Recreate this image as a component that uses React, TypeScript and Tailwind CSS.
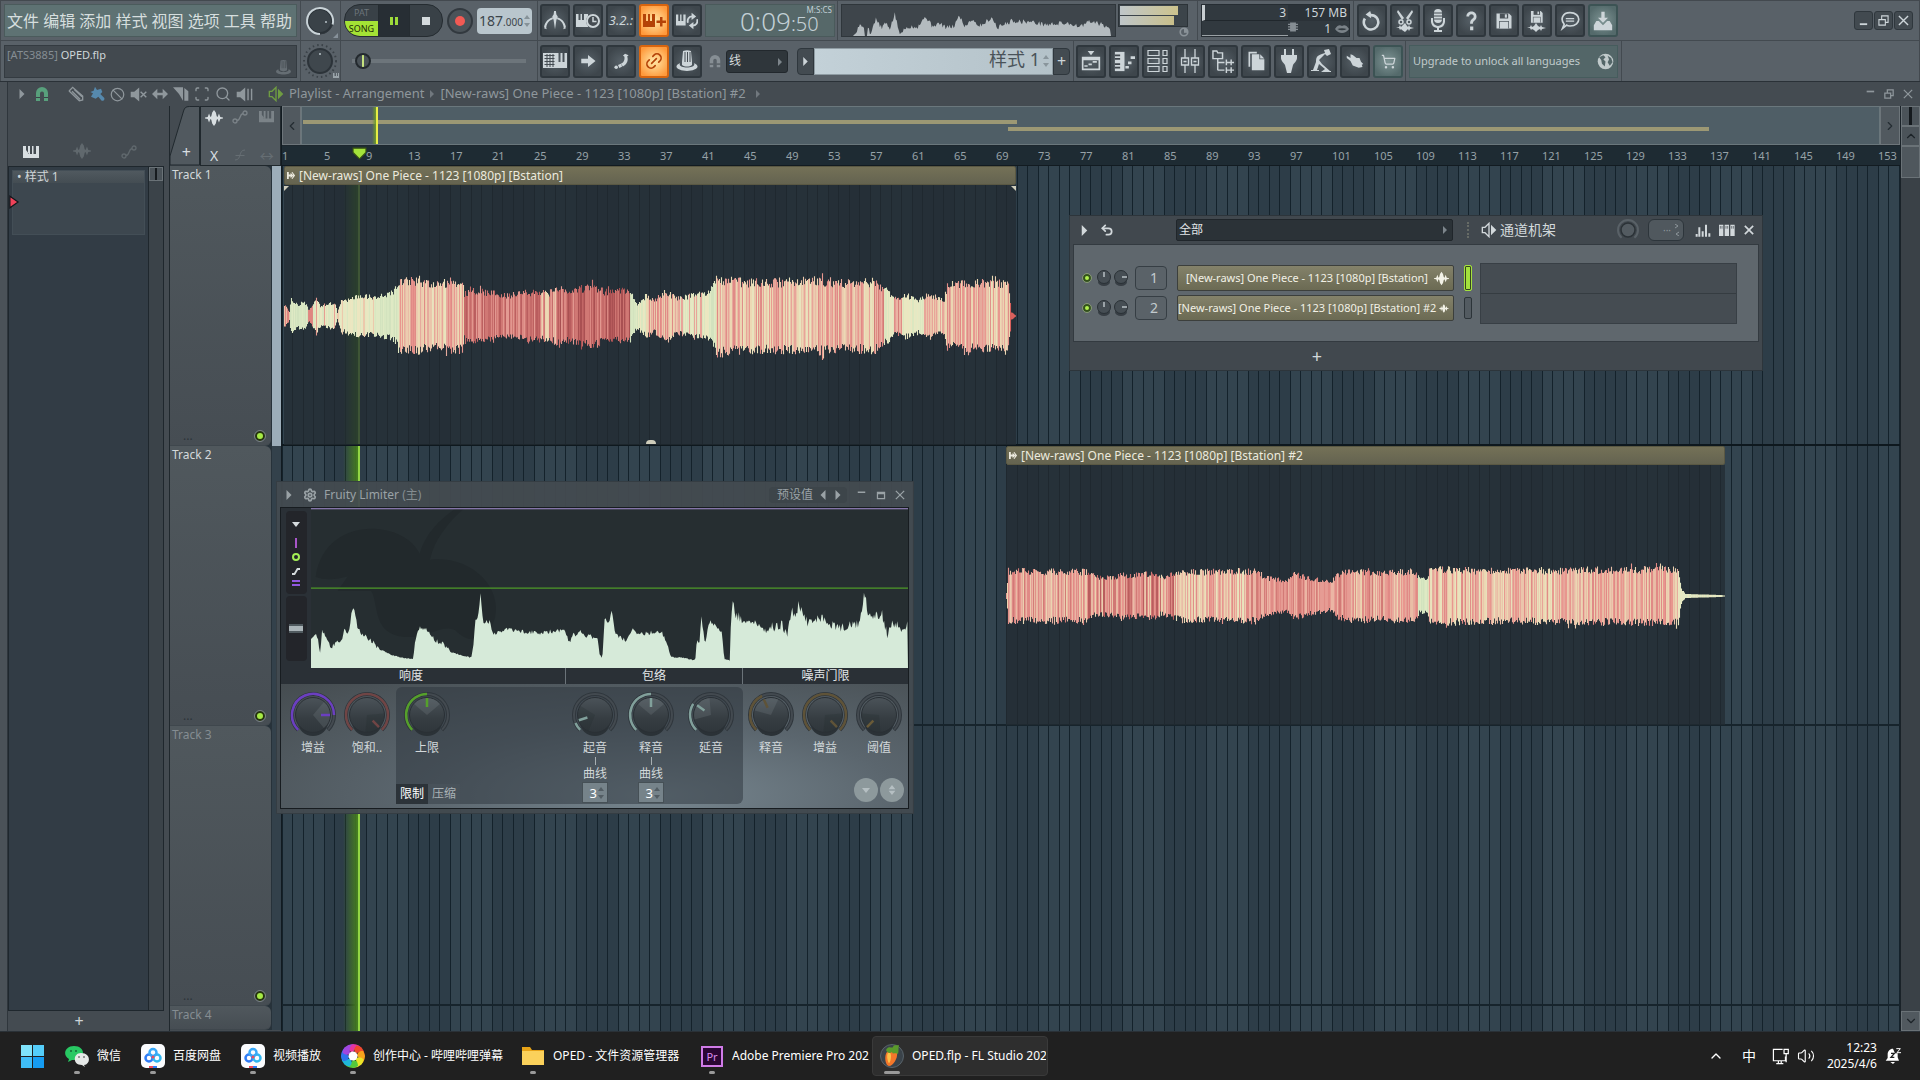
import React from "react";
import {
  Search, Ban, Scan, Link2, ShoppingCart, Undo2, Settings, Volume2, ChevronUp, ChevronDown, ChevronLeft, ChevronRight,
} from "lucide-react";

type Pt = [number, number];
type Kids = { children?: React.ReactNode };

/* ---------- helpers ---------- */

function rng(seed: number) {
  let s = seed;
  return () => {
    s = (s * 1664525 + 1013904223) % 4294967296;
    return s / 4294967296;
  };
}

function interp(pts: Pt[], x: number) {
  for (let i = 1; i < pts.length; i++) {
    if (x <= pts[i][0]) {
      const [x0, y0] = pts[i - 1];
      const [x1, y1] = pts[i];
      return y0 + ((y1 - y0) * (x - x0)) / Math.max(1, x1 - x0);
    }
  }
  return pts[pts.length - 1][1];
}

function polar(c: number, r: number, deg: number): Pt {
  const a = ((deg - 90) * Math.PI) / 180;
  return [c + r * Math.cos(a), c + r * Math.sin(a)];
}

function arc(c: number, r: number, a0: number, a1: number) {
  const [x0, y0] = polar(c, r, a0);
  const [x1, y1] = polar(c, r, a1);
  return `M${x0.toFixed(1)} ${y0.toFixed(1)}A${r} ${r} 0 ${a1 - a0 > 180 ? 1 : 0} 1 ${x1.toFixed(1)} ${y1.toFixed(1)}`;
}

/* ---------- icons ---------- */

function Ico({ s = 24, children, className = "", vb = "0 0 24 24" }: Kids & { s?: number; className?: string; vb?: string }) {
  return (
    <svg width={s} height={s} viewBox={vb} className={className} fill="currentColor" stroke="none" aria-hidden="true">
      {children}
    </svg>
  );
}

const Piano = ({ s = 16 }: { s?: number }) => (
  <Ico s={s} vb="0 0 16 16"><path d="M0 2h3v8h2V2h1v8M0 2h3v8h2.500V2h1.500v8h2V2h1.500v8H13V2h3v12H0z" fillRule="nonzero" /></Ico>
);
const Wave = ({ s = 20 }: { s?: number }) => (
  <Ico s={s} vb="0 0 20 20"><path d="M0 9.500l3-.5 1.500-4L6 9l1-1 1-4 2-3 2 3 1 4 1 1 1.500-4L17 9l3 .5v1l-3 .5-1.500 4L14 11l-1 1-1 4-2 3-2-3-1-4-1-1-1.500 4L3 11l-3-.5z" /></Ico>
);
const Auto = ({ s = 16 }: { s?: number }) => (
  <Ico s={s} vb="0 0 16 16"><g fill="none" stroke="currentColor" strokeWidth="1.300"><circle cx="3" cy="12" r="2" /><circle cx="13" cy="4" r="2" /><path d="M5 11.500c4 0 2-6 6-7" /></g></Ico>
);
const Magnet = ({ s = 16 }: { s?: number }) => (
  <Ico s={s} vb="0 0 16 16"><path d="M2 15V7a6 6 0 0112 0v8h-4V7.500a2 2 0 00-4 0V15z" /><path d="M2 11.500h4M10 11.500h4" stroke="#3a4147" strokeWidth="1" /></Ico>
);
const Floppy = () => (
  <><path d="M3 3h15l3 3v15H3z" /><path d="M7 3h10v6H7z" fill="#4a5258" /><path d="M13 4h2.500v4H13z" /><path d="M6 12h12v9H6z" fill="#5d666c" /><path d="M7 13h10v8H7z" /></>
);
const Spin = () => (
  <svg width="8" height="14" viewBox="0 0 8 14" className="shrink-0 opacity-40" fill="currentColor" aria-hidden="true"><path d="M4 1l3 4H1zM4 13l3-4H1z" /></svg>
);
const Arrow = ({ s = 8, className = "" }: { s?: number; className?: string }) => (
  <Ico s={s} vb="0 0 8 8" className={className}><path d="M2 0l4 4-4 4z" /></Ico>
);

const icons = {
  metronome: <><path d="M0 19C1 13 5 9 10 8l-.5 2C6 11 3 14 2.500 19zM24 19c-1-6-5-10-10-11l.5 2c3.500 1 6.500 4 7 9z" /><path d="M11 1h2l.5 4L15 7l-1.500 4L12 21l-1.500-10L9 7l1.500-2z" /><path d="M0 20l2-2 1 3zM24 20l-2-2-1 3z" /></>,
  wait: <><path d="M0 5h2.500v6h2V5H6v6h2V5h4v13H0z" /><circle cx="17" cy="12" r="7" fill="#454c52" /><circle cx="17" cy="12" r="6" fill="none" stroke="currentColor" strokeWidth="2" /><path d="M17 8v4.500h3.500" fill="none" stroke="currentColor" strokeWidth="1.500" /></>,
  overdub: <><path d="M1 5h3v7h2V5h2v7h2V5h3v13H1z" /><path d="M18 8h2.500v3.500H24V14h-3.500v3.500H18V14h-3.500v-2.500H18z" /></>,
  loop: <><path d="M0 5h2.500v7h2V5H6v7h2V5h2.500v12H0z" /><g fill="none" stroke="currentColor" strokeWidth="2"><path d="M13 14c-1-4 1-7 5-7M23 10c1 4-1 7-5 7" /></g><path d="M17 3l5 4-5 4zM19 21l-5-4 5-4z" /></>,
  typing: <><path d="M0 4h13v15H0z" /><path d="M1.500 6.500h10M1.500 9.500h10M1.500 12.500h10M1.500 15.500h10M4 5v13M7 5v13M10 5v13" stroke="#454c52" /><path d="M13 4h2.500v9h2V4h2v9h2V4H24v15H13z" /></>,
  arrow: <path d="M3 9h9V4l10 8-10 8v-5H3z" />,
  notes: <><path d="M17 1l5 2-2 2c2 5 0 11-6 14l-3-4c4-1 6-5 5-10l-2-1z" /><circle cx="4.500" cy="20" r="2.500" /><path d="M7 17l4-2 2 4-4 2z" /></>,
  hat: <><path d="M8 2c3-1 5-1 8 0l1 11v3c-3 2-7 2-10 0v-3z" /><path d="M10 3v10M12.500 3v10M15 3v10" stroke="#454c52" /><path d="M5 14c-8 4-1 8 7 8s15-4 7-8c3 6-17 6-14 0z" /></>,
  undo: <path d="M10 1L5 5l6 4V7a6.500 6.500 0 11-5.500 3L3 8.500A9.300 9.300 0 1011 4z" />,
  cut: <><path d="M5 1l6 8-2 2L4 3zM19 1l-6 8 2 2 5-8z" /><g fill="none" stroke="currentColor" strokeWidth="1.500"><circle cx="8" cy="13" r="2" /><circle cx="16" cy="13" r="2" /></g><path d="M3 19l3-1 1-2 1 2 1-1 3-3 2 3 1 1 1-2 1 2 4 1-4 1-1 2-1-2-1 1-2 2-3-2-1-1-1 1-1-2z" /></>,
  mic: <><rect x="8" y="0" width="8" height="14" rx="4" /><path d="M8 4h8M8 7h8M8 10h8" stroke="#454c52" strokeWidth="1" /><path d="M5 9h2v3a5 5 0 0010 0V9h2v4a7 7 0 01-6 6v2h3v2H8v-2h3v-2a7 7 0 01-6-6z" /></>,
  help: <path d="M7 7c0-7 11-7 11 0 0 5-4 4-4 8h-3c0-6 4-5 4-8 0-3-5-3-5 0zM11 18h3.500v4H11z" />,
  save: <Floppy />,
  saveNew: <><g transform="translate(4 0) scale(.65)"><Floppy /></g><path d="M2 19l3-1 1-2 1 2 2-1 2-3 2 3 2 1 1-2 1 2 4 1-4 1-1 2-1-2-2 1-2 2-2-2-2-1-1 1-1-2z" /></>,
  chat: <g fill="none" stroke="currentColor" strokeWidth="2"><path d="M12 2c14 0 14 16 0 16-2 0-3 0-4-1l-5 4 2-5C0 10 3 2 12 2z" /><path d="M7 9h10M7 12h10" strokeWidth="1.500" /></g>,
  download: <path d="M10 1h4v7h4l-6 6-6-6h4zM4 12h3l5 5 5-5h3l3 5v6H1v-6z" />,
  playlist: <><path d="M8 0h8l-4 5z" /><path d="M1 7h22v16H1zM3 11v10h18V11z" fillRule="evenodd" /><path d="M4 17h4v2H4zM9 15h4v2H9zM14 12h5v2h-5z" /></>,
  pianoRoll: <><path d="M1 1h11v22H1z" /><path d="M1 5h6M1 9h6M1 15h6M1 19h6" stroke="#3f464c" strokeWidth="2" /><path d="M13 17h4v3h-4zM16 12h4v3h-4zM19 6h5v3h-5z" /></>,
  channels: <g fill="none" stroke="currentColor" strokeWidth="1.200"><path d="M3 1.500h11v5H3zM3 9.500h11v5H3zM3 17.500h11v5H3zM18 1.500h4v5h-4zM18 9.500h4v5h-4zM18 17.500h4v5h-4z" /></g>,
  mixer: <g fill="none" stroke="currentColor" strokeWidth="1.300"><path d="M7 0v9M7 16v8M17 0v9M17 16v8M3.500 9h7v7h-7zM13.500 9h7v7h-7zM5.500 12.500h3M15.500 12.500h3" /></g>,
  browser: <g fill="none" stroke="currentColor" strokeWidth="1.500"><path d="M1 1h4l1 2h5v6H1zM6 9v12M6 13h7M6 21h7M15 10v6M20 10v6M15 13h8M15 18v6M20 18v6M15 21h8" /></g>,
  copy: <><path d="M3 1h10v2H5v16H3z" /><path d="M7 4h9v6h6v13H7z" /><path d="M17 4l5 5h-5z" /></>,
  plug: <path d="M7 0h2v6h6V0h2v6h3v3c0 3-3 5-4 7l-2 8h-4l-2-8C7 14 4 12 4 9V6h3z" />,
  tempo: <path d="M14 1l5-1 2 5-4 2-2-2-6 6 3 4 8 7h1v1H11l4-3-6-5-2 6h2v1H1v-1h2l3-8c0-6 2-7 9-9z" />,
  hand: <path d="M1 5l5 3V3l3 1 5 4h4l2 5 3 3-2 1 1 3-5 1-8-3-3-6-5-4z" />,
};

type IconName = keyof typeof icons;

/* ---------- controls ---------- */

function ToolBtn({ name, tone = "dark", size = 24, label }: { name?: IconName; tone?: "dark" | "hot" | "teal"; size?: number; label: string }) {
  const tones = {
    dark: "border-[#2f373d] bg-[radial-gradient(circle,#566067_0%,#3e464c_75%)] text-[#cdd5d9]",
    hot: "border-[#d8650f] bg-[radial-gradient(circle,#ffe8a8_0%,#ff9a3c_85%)] text-[#b44308]",
    teal: "border-[#3c5354] bg-[radial-gradient(circle,#7e9494_0%,#546a6b_80%)] text-[#cdd5d9]",
  };
  return (
    <button aria-label={label} className={`flex h-[33px] w-[30px] shrink-0 items-center justify-center rounded-[3px] border-2 ${tones[tone]}`}>
      {name ? <Ico s={size}>{icons[name]}</Ico> : label === "倒计时" ? <span className="text-[13px] italic leading-none">3.2.:</span> : label === "链接" ? <Link2 size={20} strokeWidth={2} className="-rotate-45" /> : <ShoppingCart size={15} />}
    </button>
  );
}

function Sect({ children, className = "" }: Kids & { className?: string }) {
  return <div className={`flex h-full shrink-0 items-center border-r border-[#434a50] ${className}`}>{children}</div>;
}

function TopBar() {
  const menus = ["文件", "编辑", "添加", "样式", "视图", "选项", "工具", "帮助"];
  const pts: Pt[] = [[0, 0], [11, 0], [14, 3], [17, 11], [22, 10], [23, 0], [25, 0], [26, 11], [28, 2], [34, 18], [40, 8], [43, 14], [48, 8], [53, 23], [58, 2], [66, 10], [76, 10], [84, 21], [90, 11], [98, 13], [105, 9], [112, 10], [118, 22], [123, 10], [130, 18], [138, 11], [142, 13], [150, 20], [156, 9], [170, 16], [190, 15], [205, 12], [225, 14], [240, 10], [247, 15], [256, 14], [268, 9], [270, 0], [274, 0]];
  const r = rng(5);
  let d = "M0 33";
  for (let x = 0; x <= 274; x++) {
    const v = interp(pts, x);
    d += `L${x} ${(33 - Math.max(0, v + (v > 4 ? (r() - 0.5) * 5 : 0))).toFixed(1)}`;
  }
  d += "L274 33Z";
  return (
    <header className="shrink-0 border border-b-0 border-[#43494f] bg-[#596168] text-[#cdd5d9]">
      <div className="flex h-10 items-center border-b border-[#434a50]">
        <Sect className="w-[300px] pl-[3px] pr-[3px]">
          <nav className="flex h-[33px] w-full items-center justify-around border border-[#4b5b5c] bg-[#5e7273] pr-[2px] text-base leading-none text-[#d6dede]">
            {menus.map((m) => <button key={m}>{m}</button>)}
          </nav>
        </Sect>
        <Sect className="w-10 justify-center">
          <svg width="34" height="34" viewBox="0 0 34 34" role="img" aria-label="主音量">
            <circle cx="16" cy="17" r="12" fill="#3a4248" stroke="#2b3238" strokeWidth="2" />
            <circle cx="16" cy="17" r="13" fill="none" stroke="#2f363c" />
            <path d={arc(16, 13, 180, 465)} transform="translate(0 1)" stroke="#c9d3d8" strokeWidth="2" fill="none" />
            <circle cx="22" cy="18" r="1" fill="#b9c3c8" /><path d="M34 29v5h-5z" fill="#87919a" />
          </svg>
        </Sect>
        <Sect className="w-[197px] gap-1 pl-[3px]">
          <div className="flex h-[33px] w-[99px] overflow-hidden rounded-[16px] border border-[#252c31] bg-[#394147]">
            <button className="flex w-[34px] flex-col border-r border-[#252c31] text-[9px] leading-[15px]">
              <span className="h-4 w-full text-[#6c747a]">PAT</span>
              <span className="h-4 w-full rounded-bl-xl bg-[#a4e335] text-[#1c2a08]">SONG</span>
            </button>
            <button aria-label="暂停" className="flex w-[31px] items-center justify-center gap-[2px] border-r border-[#252c31] bg-[#272e34]">
              <i className="h-2 w-[3px] bg-[#9ddb3a]" /><i className="h-2 w-[3px] bg-[#9ddb3a]" />
            </button>
            <button aria-label="停止" className="flex flex-1 items-center justify-center"><i className="h-2 w-2 bg-[#d4dadd]" /></button>
          </div>
          <button aria-label="录音" className="flex h-[26px] w-[26px] items-center justify-center rounded-full border-2 border-[#32393f] bg-[#4b5359]"><i className="h-[10px] w-[10px] rounded-full bg-[#f25a54]" /></button>
          <div className="flex h-[26px] w-[55px] items-center justify-between rounded bg-[#b9c6cd] px-[2px] text-[#3c454b]">
            <span className="text-sm leading-none">187<span className="text-[10px]">.000</span></span>
            <Spin />
          </div>
        </Sect>
        <Sect className="w-[300px] gap-[3px] px-[2px]">
          <ToolBtn name="metronome" label="节拍器" size={22} />
          <ToolBtn name="wait" label="等待输入" />
          <ToolBtn label="倒计时" />
          <ToolBtn name="overdub" tone="hot" label="叠录" />
          <ToolBtn name="loop" label="循环录音" size={22} />
          <div className="flex h-[33px] flex-1 border border-[#4a5a5b] bg-[#566869] pr-[2px] text-[#c3d0d6]">
            <span className="flex-1 text-right text-[26px] font-light leading-[32px]">0:09<span className="text-xl leading-none">:50</span></span>
            <span className="-ml-3 h-3 text-[8px] leading-[9px]">M:S:CS</span>
          </div>
        </Sect>
        <Sect className="w-[360px] gap-[2px] pl-[3px]">
          <div className="h-[33px] w-[275px] border border-[#2f363b] bg-[#3e454b]">
            <svg className="h-full w-full" viewBox="0 0 274 33" preserveAspectRatio="none" aria-label="示波器"><path d={d} fill="#b4bbbf" /></svg>
          </div>
          <div className="flex h-[33px] w-[77px] flex-col items-end">
            <div className="flex w-[70px] flex-col gap-px self-start border border-[#2c3338] bg-[#3c444a] p-px">
              <i className="h-[9px] w-[58px] bg-linear-to-r from-[#bfc6c9] to-[#cdc38c]" />
              <i className="h-[9px] w-[54px] bg-linear-to-r from-[#bfc6c9] to-[#c9bf8a]" />
            </div>
            <Ico s={10} className="mr-[6px] text-[#8a9298]"><circle cx="12" cy="12" r="9" fill="none" stroke="currentColor" strokeWidth="4" /><path d="M12 4v10h8V4z" /></Ico>
          </div>
        </Sect>
        <Sect className="w-[156px] px-[3px]">
          <div className="grid h-[33px] w-full grid-cols-[86px_1fr] grid-rows-[16px_15px] border border-[#262d33] bg-[#31393f] text-xs leading-[15px]">
            <span className="border-b border-l-[3px] border-[#20272c] border-l-[#c8ced1] pr-[2px] text-right">3</span>
            <span className="bg-[#2b3238] pr-[2px] text-right">157 MB</span>
            <span className="border-b border-[#9aa1a5]" />
            <span className="flex items-center justify-end gap-1">
              <Ico s={10} className="mb-1 mr-auto text-[#858d93]"><path d="M5 1h14v22H5zM0 4h24v3H0zM0 10h24v3H0zM0 16h24v3H0z" /></Ico>
              1
              <Ico s={14} className="text-[#7a8288]"><path d="M0 12c5-8 9-7 12-5 3-2 7-3 12 5-6 9-18 9-24 0zm4 0c5 3 11 3 16 0-5-2-11-2-16 0z" fillRule="evenodd" /></Ico>
            </span>
          </div>
        </Sect>
        <div className="flex gap-[3px] pl-[3px]">
          <ToolBtn name="undo" label="撤销" size={22} /><ToolBtn name="cut" label="剪切" /><ToolBtn name="mic" label="录制" /><ToolBtn name="help" label="帮助" size={22} />
          <ToolBtn name="save" label="保存" size={20} /><ToolBtn name="saveNew" label="另存" /><ToolBtn name="chat" label="聊天" size={20} /><ToolBtn name="download" tone="teal" label="下载" size={20} />
        </div>
        <div className="ml-auto mr-[6px] flex gap-px">
          {["最小化", "还原", "关闭"].map((l, i) => (
            <button key={l} aria-label={l} className="flex h-[19px] w-[19px] items-center justify-center rounded-[3px] border border-[#2f373d] bg-[#424a50]">
              <Ico s={11} vb="0 0 12 12">
                {i === 0 && <path d="M2 9h8v2H2z" />}
                {i === 1 && <g fill="none" stroke="currentColor" strokeWidth="1.200"><path d="M1 5h7v6H1zM4 5V1h7v7H8" /></g>}
                {i === 2 && <path d="M1 1l10 10M11 1L1 11" stroke="currentColor" strokeWidth="1.500" />}
              </Ico>
            </button>
          ))}
        </div>
      </div>
      <div className="flex h-[40px] items-center">
        <Sect className="w-[300px] pl-[3px] pr-[3px]">
          <div className="flex h-[33px] w-full items-start justify-between border border-[#343b41] bg-[#42494f] pl-[2px] pr-1 pt-px text-[11px] leading-4">
            <span className="text-[#858d93]">[ATS3885] <span className="text-[#cfd6d9]">OPED.flp</span></span>
            <Ico s={17} className="mt-3 text-[#666e74]">{icons.hat}</Ico>
          </div>
        </Sect>
        <Sect className="w-10 justify-center">
          <svg width="36" height="36" viewBox="0 0 36 36" role="img" aria-label="主音高">
            <circle cx="17" cy="18" r="16" fill="none" stroke="#3a4147" strokeWidth="2" strokeDasharray="1.500 3" />
            <circle cx="17" cy="18" r="12" fill="#3f474d" stroke="#2c3339" strokeWidth="2" /><circle cx="17" cy="11" r="1" fill="#b9c3c8" />
            <path d="M30 30h1.500v3H33v-3h1v3h1v-3h1v5h-6z" fill="#9aa4aa" />
          </svg>
        </Sect>
        <Sect className="w-[197px] px-[11px]">
          <input type="range" aria-label="主控滑块" defaultValue={2} className="h-4 w-full appearance-none bg-[linear-gradient(#6d757b,#6d757b)] bg-[length:100%_4px] bg-center bg-no-repeat [&::-webkit-slider-thumb]:h-4 [&::-webkit-slider-thumb]:w-4 [&::-webkit-slider-thumb]:appearance-none [&::-webkit-slider-thumb]:rounded-full [&::-webkit-slider-thumb]:border-2 [&::-webkit-slider-thumb]:border-[#23292e] [&::-webkit-slider-thumb]:bg-[linear-gradient(90deg,#4a5258_5px,#c5e27f_5px,#c5e27f_7px,#4a5258_7px)]" />
        </Sect>
        <Sect className="w-[536px] px-[2px]">
          <div className="flex gap-[3px]">
            <ToolBtn name="typing" label="键盘输入" /><ToolBtn name="arrow" label="自动滚动" size={18} /><ToolBtn name="notes" label="音符" size={17} /><ToolBtn tone="hot" label="链接" /><ToolBtn name="hat" label="多连接" size={24} />
          </div>
          <span className="ml-[6px] text-[#868e94]"><Magnet s={14} /></span>
          <div className="relative ml-1">
            <select aria-label="吸附" className="block h-[23px] w-[62px] appearance-none rounded-[3px] border border-[#22282d] bg-[#2f363b] pl-[2px] text-xs text-[#d5dbde]"><option>线</option></select>
            <Arrow className="pointer-events-none absolute right-1 top-2 text-[#7d858b]" />
          </div>
          <button aria-label="样式列表" className="ml-[9px] flex h-[27px] w-[17px] items-center justify-center rounded-l border border-[#2f373d] bg-[#434b51]"><Arrow s={9} /></button>
          <div className="flex h-[27px] w-[239px] items-center justify-end gap-[2px] border border-[#8f9ca3] bg-linear-to-r from-[#c3d1d8] to-[#b4c2c9] pr-[2px] text-lg leading-none text-[#4a5359]"><span className="-mt-1">样式 1</span> <Spin /></div>
          <button aria-label="新样式" className="h-[27px] w-[17px] rounded-r border border-[#2f373d] bg-[#434b51] text-base leading-none">+</button>
        </Sect>
        <Sect className="w-[332px] gap-[3px] pl-[2px]">
          <ToolBtn name="playlist" label="播放列表" size={20} /><ToolBtn name="pianoRoll" label="钢琴卷" size={21} /><ToolBtn name="channels" label="通道机架" size={24} /><ToolBtn name="mixer" label="混音台" size={24} /><ToolBtn name="browser" label="浏览器" size={23} />
          <ToolBtn name="copy" label="项目" size={20} /><ToolBtn name="plug" label="插件" size={24} /><ToolBtn name="tempo" label="节拍" size={24} /><ToolBtn name="hand" label="触控" size={18} /><ToolBtn tone="teal" label="商店" />
        </Sect>
        <Sect className="w-[216px] px-[3px]">
          <a href="#upgrade" className="flex h-[33px] w-full items-center justify-between whitespace-nowrap border border-[#465c5d] bg-[#536668] px-[3px] text-[10px] text-[#c0cacb] xl:text-[10px]">
            <span className="text-[11px]">Upgrade to unlock all languages</span>
            <Ico s={17}><circle cx="12" cy="12" r="11" /><path d="M3 6l6-3 3 3-3 3 3 3-1 7-4-4-1-5zM15 4l5 3 2 6-4 5-3-5 2-4z" fill="#536668" /></Ico>
          </a>
        </Sect>
      </div>
    </header>
  );
}

/* ---------- playlist ---------- */

function PlaylistTitle() {
  return (
    <div className="flex h-6 shrink-0 items-center text-[#8f979c]">
      <Arrow s={10} className="ml-[9px]" />
      <span className="ml-[7px] text-[#58a07c]"><Magnet s={16} /></span>
      <div className="ml-[18px] flex items-center gap-[5px]">
        <Ico s={16}><g fill="none" stroke="currentColor" strokeWidth="2"><path d="M2 7l5-5 15 13v6l-5 1L2 8zM6 8l12 12M9 5l12 11" /></g></Ico>
        <Ico s={16} className="text-[#5689ad]"><path d="M9 1l3 5 6-2 2 5-3 3 6 6c1 3-2 5-4 4l-5-6-4 3-7-3 3-5-4-2 5-2z" /></Ico>
        <Ban size={15} />
        <Ico s={17}><path d="M1 8h5l7-6v20l-7-6H1z" /><path d="M15 8l8 8M23 8l-8 8" stroke="currentColor" strokeWidth="2" /></Ico>
        <Ico s={16}><path d="M0 12l8-8v6h8V4l8 8-8 8v-6H8v6z" /></Ico>
        <Ico s={16}><path d="M0 2h15v20L9 12zM17 3l6 5v14h-6z" /></Ico>
        <Scan size={16} />
        <Search size={16} />
        <Ico s={17}><path d="M1 8h5l7-6v20l-7-6H1zM16 4h2v16h-2zM21 4h2v16h-2z" /></Ico>
      </div>
      <Ico s={16} className="ml-[15px] text-[#6f9c42]"><path d="M2 8h4l6-6v20l-6-6H2z" fill="none" stroke="currentColor" strokeWidth="2" /><path d="M15 4l8 8-8 8z" /></Ico>
      <h1 className="ml-[5px] text-[13px]">Playlist - Arrangement</h1>
      <Arrow className="mx-1 opacity-60" />
      <span className="text-[13px]">[New-raws] One Piece - 1123 [1080p] [Bstation] #2</span>
      <Arrow className="ml-2 opacity-60" />
      <div className="ml-auto mr-[7px] flex gap-[9px]">
        <Ico s={10} vb="0 0 12 12"><path d="M2 2h9v2H2z" /></Ico>
        <Ico s={10} vb="0 0 12 12"><g fill="none" stroke="currentColor" strokeWidth="1.500"><path d="M1 5h7v6H1zM4 5V1h7v7H8" /></g></Ico>
        <Ico s={10} vb="0 0 12 12"><path d="M1 1l10 10M11 1L1 11" stroke="currentColor" strokeWidth="1.500" /></Ico>
      </div>
    </div>
  );
}

function Picker() {
  return (
    <aside className="flex w-[161px] shrink-0 flex-col pr-[5px]">
      <div className="flex h-[60px] items-end gap-[34px] pb-[6px] pl-[15px] text-[#60686d]">
        <button aria-label="样式" className="text-[#d8dee1]"><Piano /></button>
        <button aria-label="音频"><Wave s={18} /></button>
        <button aria-label="自动化" className="-ml-1"><Auto /></button>
      </div>
      <div className="flex flex-1 border border-[#1f272d] bg-[#323c45]">
        <ul className="flex-1 border-r border-[#1f272d] p-[3px]">
          <li className="relative h-[65px] border border-[#434e56] bg-[#3d474f]">
            <button className="block h-3 w-full bg-linear-to-b from-[#50595f] to-[#444d53] pl-1 text-left text-xs leading-3 text-[#cfd5d8]">• 样式 1</button>
            <Ico s={14} vb="0 0 9 12" className="absolute -left-[6px] top-6 text-[#ef4259]"><path d="M1 1l7 5-7 5z" stroke="#11161a" /></Ico>
          </li>
        </ul>
        <div className="w-[14px] bg-[#3b4349]">
          <div className="flex h-[14px] justify-center border border-[#6a7277] bg-[#4b5359]"><i className="w-[2px] bg-[#161b1f]" /></div>
        </div>
      </div>
      <button aria-label="添加样式" className="h-5 pr-[14px] text-base leading-5 text-[#cdd4d8]">+</button>
    </aside>
  );
}

function TrackHeaders() {
  return (
    <div className="flex w-[112px] shrink-0 flex-col border-l border-[#20282d]">
      <div className="flex h-[60px] shrink-0">
        <div className="relative w-[30px]">
          <svg className="h-full w-full" viewBox="0 0 31 60" preserveAspectRatio="none" aria-hidden="true"><path d="M0 59V50L14 5C15 2 16 .5 20 .5H30.500V59z" fill="#51595f" stroke="#20282d" /></svg>
          <button aria-label="添加轨道" className="absolute bottom-[6px] right-[9px] text-base leading-none text-[#d8dee1]">+</button>
        </div>
        <div className="grid flex-1 grid-cols-3 content-between justify-items-center border border-[#20282d] bg-[#51595f] py-[2px] text-[#7b8388]">
          <span className="text-[#d8dee1]"><Wave s={18} /></span><Auto /><Piano s={15} />
          <span className="text-sm leading-none text-[#d8dee1]">X</span>
          <Ico s={12} className="opacity-50"><path d="M2 22C16 22 8 2 22 2M3 13h18" fill="none" stroke="currentColor" strokeWidth="2" /></Ico>
          <span className="text-sm leading-none opacity-50">↔</span>
        </div>
      </div>
      {[1, 2, 3, 4].map((n) => (
        <div key={n} className={`flex shrink-0 bg-[#27323a] ${n < 4 ? "h-[280px]" : "h-6"}`}>
          <div className={`flex w-[101px] flex-col justify-between rounded-r-md border-b border-[#3f474d] bg-linear-to-b from-[#50585d] to-[#464d53] pl-[2px] ${n > 2 ? "text-[#858d92]" : "text-[#d4d9db]"}`}>
            <span className="text-xs leading-[18px]">Track {n}</span>
            {n < 4 && (
              <div className="flex items-center justify-between pb-[3px] pl-[11px] pr-[6px]">
                <span className="text-xs leading-3 text-[#2d343a]">...</span>
                <button aria-label={`Track ${n} 开关`} className="h-[10px] w-[10px] rounded-full border-2 border-[#26350f] bg-[#a6ea45] outline outline-[#7b8387]" />
              </div>
            )}
          </div>
          <div className={`ml-px flex-1 ${n === 1 ? "bg-[#9cadb9]" : "bg-[#33414b]"}`} />
        </div>
      ))}
    </div>
  );
}

type Zone = [number, string[]];

function Waveform({ width, amp, zones, seed, label }: { width: number; amp: Pt[]; zones: Zone[]; seed: number; label: string }) {
  const r = rng(seed);
  const paths: Record<string, string> = {};
  for (let x = 0; x < width; x++) {
    const a = interp(amp, x);
    const j = a < 4 ? 0 : a * 0.28;
    const up = Math.max(0.5, a + (r() - 0.8) * j + (r() > 0.96 ? j * 0.4 : 0));
    const dn = Math.max(0.5, a + (r() - 0.8) * j + (r() > 0.96 ? j * 0.4 : 0));
    const cols = (zones.find((z) => x < z[0]) || zones[zones.length - 1])[1];
    const c = cols[Math.floor(r() * cols.length)];
    paths[c] = (paths[c] || "") + `M${x + 0.5} ${(131 - up).toFixed(1)}V${(131 + dn).toFixed(1)}`;
  }
  return (
    <svg width={width} height="260" viewBox={`0 0 ${width} 260`} role="img" aria-label={label} className="block">
      {Object.entries(paths).map(([c, d]) => <path key={c} d={d} stroke={c} strokeWidth="1.100" />)}
    </svg>
  );
}

const pale = ["#e9e8c2", "#e4e9c4", "#ece6c0", "#dbe7c1"];
const green = ["#d8e7c2", "#d2e2be", "#dfe9c4"];
const mix = ["#e9bda6", "#e8968e", "#ecd9b4", "#e6aa9d", "#eccdb0", "#e08a86"];
const lightMix = ["#ecd9b4", "#e9e3bd", "#e8a499", "#ebc5ab"];
const red = ["#d07874", "#b95d5e", "#e39a92", "#c56a69", "#dc8a84"];
const deepRed = ["#c56a69", "#b95d5e", "#d07874", "#a95052"];
const pink = ["#e08c86", "#e69c94", "#d27a76", "#ebb5a4"];

const amp1: Pt[] = [[0, 12], [5, 5], [7, 18], [14, 12], [20, 15], [25, 6], [32, 18], [36, 11], [46, 13], [51, 12], [53, 3], [57, 16], [70, 20], [80, 21], [90, 20], [105, 23], [113, 28], [115, 36], [133, 38], [150, 33], [165, 37], [178, 37], [180, 24], [190, 27], [225, 22], [240, 25], [265, 25], [275, 30], [283, 27], [310, 32], [320, 26], [345, 27], [353, 13], [362, 22], [370, 17], [380, 25], [395, 19], [412, 23], [425, 25], [432, 38], [480, 36], [540, 38], [560, 35], [590, 37], [602, 28], [612, 18], [620, 23], [635, 17], [645, 23], [660, 18], [663, 33], [690, 35], [724, 36], [727, 4], [732, 0]];
const zones1: Zone[] = [[6, ["#df8580", "#e9c4a8"]], [24, green], [29, ["#df8580"]], [51, [...pale, "#e59a90"]], [90, [...pale, "#ecc9ac"]], [115, green], [146, mix], [162, lightMix], [180, mix], [255, red], [275, [...red, ...mix]], [330, [...red, ...deepRed]], [346, deepRed], [354, green], [362, pale], [395, mix], [425, [...pale, "#e8a499"]], [432, green], [500, [...mix, ...lightMix]], [530, lightMix], [580, mix], [590, lightMix], [600, pink], [610, pale], [618, pink], [640, pale], [662, lightMix], [680, mix], [726, [...mix, ...lightMix]], [732, ["#d9605c"]]];
const amp2: Pt[] = [[0, 3], [2, 27], [80, 26], [90, 20], [110, 21], [115, 24], [125, 22], [150, 24], [155, 19], [175, 26], [250, 27], [258, 20], [280, 16], [287, 24], [300, 20], [325, 15], [330, 22], [345, 27], [375, 25], [408, 27], [413, 18], [421, 18], [423, 29], [480, 27], [580, 28], [672, 29], [675, 8], [679, 2], [715, 1], [719, 0]];
const zones2: Zone[] = [[80, [...mix, ...pink]], [170, [...red, ...mix]], [240, [...mix, ...lightMix]], [345, pink], [412, [...pink, ...mix]], [422, green], [500, [...lightMix, ...mix]], [570, [...mix, ...lightMix]], [672, mix], [719, pale]];

function Clip({ title, className, children }: Kids & { title: string; className: string }) {
  return (
    <article className={`absolute top-0 ${className}`}>
      <h2 className="flex h-[19px] items-center gap-[3px] whitespace-nowrap rounded-[2px] border border-[#5a5843] bg-linear-to-b from-[#747157] to-[#646350] pl-[2px] text-xs leading-none text-[#eceade]">
        <Ico s={9} vb="0 0 10 10"><path d="M0 1h2v3h2V2l3 3-3 3V6H2v3H0zM5 1h1l3 4-3 4H5l2-4z" /></Ico>
        {title}
      </h2>
      <div className="h-[260px] bg-[#232b32]/75">{children}</div>
    </article>
  );
}

function Arrangement() {
  const marks = Array.from({ length: 39 }, (_, i) => 1 + i * 4);
  return (
    <div className="flex min-w-0 flex-1 flex-col border-l border-[#121b21]">
      <div className="flex h-10 shrink-0 border-b border-[#1d272e] text-[#242c32]">
        <button aria-label="向左" className="flex w-[19px] items-center justify-center border border-[#6d757a] bg-[#51595f]"><ChevronLeft size={14} /></button>
        <div className="relative flex-1 overflow-hidden border border-[#6a777c] bg-[#4f5e66]">
          <div className="absolute left-[1px] top-[13px] h-1 w-[714px] bg-[#9c9874]" />
          <div className="absolute left-[706px] top-5 h-1 w-[701px] bg-[#9c9874]" />
          <div className="absolute left-[70px] top-0 h-full w-[6px] border-r-2 border-[#e8ee47] bg-linear-to-r from-transparent to-[#6d9a2b]" />
        </div>
        <button aria-label="向右" className="flex w-5 items-center justify-center border border-[#6d757a] bg-[#51595f]"><ChevronRight size={14} /></button>
      </div>
      <div className="relative flex h-5 shrink-0 overflow-hidden border-b border-[#121b21] bg-[#1e2b33] text-[#97a2a8]">
        {marks.map((m) => <span key={m} className="w-[42px] shrink-0 text-[11px] leading-[20px]">{m}</span>)}
        <Ico s={15} vb="0 0 14 12" className="absolute left-[70px] top-0 text-[#a3e33b]"><path d="M1 1h12v4l-6 6-6-6z" stroke="#3c5a12" /></Ico>
      </div>
      <div className="relative flex-1 overflow-hidden bg-[repeating-linear-gradient(90deg,#14222b_0_1px,transparent_1px_10px,#14222b_10px_11px,transparent_11px_21px),repeating-linear-gradient(90deg,#33444f_0_42px,#2d3d48_42px_84px)]">
        <div className="absolute left-[61px] top-0 h-full w-[17px] border-r-2 border-[#93d645] bg-linear-to-r from-transparent to-[#467f20]" />
        <div className="relative h-[280px] border-b-2 border-[#0e181e]">
          <Clip title="[New-raws] One Piece - 1123 [1080p] [Bstation]" className="left-[2px] w-[732px]">
            <Waveform width={732} amp={amp1} zones={zones1} seed={11} label="音频波形 1" />
          </Clip>
          <i className="absolute bottom-0 left-[364px] h-1 w-[10px] rounded-t-full bg-[#cfcdbb]" />
          <Ico s={5} vb="0 0 5 5" className="absolute left-[2px] top-5 text-[#cfcdbb]"><path d="M0 0h5L0 5z" /></Ico>
          <Ico s={5} vb="0 0 5 5" className="absolute left-[729px] top-5 text-[#cfcdbb]"><path d="M0 0h5v5z" /></Ico>
        </div>
        <div className="relative h-[280px] border-b-2 border-[#17242c]">
          <Clip title="[New-raws] One Piece - 1123 [1080p] [Bstation] #2" className="left-[724px] w-[719px]">
            <Waveform width={719} amp={amp2} zones={zones2} seed={29} label="音频波形 2" />
          </Clip>
        </div>
        <div className="h-[280px] border-b-2 border-[#17242c]" />
      </div>
    </div>
  );
}

function VScroll() {
  return (
    <div className="flex w-5 shrink-0 flex-col border-l border-[#1a2228] bg-[#3a4147] text-[#1c2328]">
      <div className="flex h-5 justify-center border border-[#6a7277] bg-[#4b5359]"><i className="w-[3px] bg-[#14191d]" /></div>
      <button aria-label="向上" className="flex h-5 items-center justify-center border border-[#6a7277] bg-[#4b5359]"><ChevronUp size={14} /></button>
      <div className="h-8 border border-[#6a7277] bg-[#4f575d]" />
      <button aria-label="向下" className="mt-auto flex h-5 items-center justify-center border border-[#6a7277] bg-[#51595f]"><ChevronDown size={14} /></button>
    </div>
  );
}

/* ---------- channel rack ---------- */

function Dial({ side = false }: { side?: boolean }) {
  return (
    <svg width="14" height="18" viewBox="0 0 14 18" aria-hidden="true">
      <ellipse cx="7" cy="13" rx="6" ry="4" fill="#373e44" /><circle cx="7" cy="8" r="6.500" fill="#464e54" stroke="#2a3136" />
      <path d={side ? "M8 8h5" : "M7 3v5"} stroke="#b9c1c5" strokeWidth="1.500" />
    </svg>
  );
}

function ChannelRack() {
  const rows = ["[New-raws] One Piece - 1123 [1080p] [Bstation]", "[New-raws] One Piece - 1123 [1080p] [Bstation] #2"];
  return (
    <section aria-label="通道机架" className="absolute left-[1069px] top-[215px] w-[694px] border border-[#2d353b] bg-[#41484e] px-[3px] text-[#d2d8db]">
      <div className="flex h-7 items-center">
        <Arrow s={11} className="ml-[6px]" />
        <Undo2 size={14} strokeWidth={3} className="ml-[10px]" />
        <div className="relative ml-[62px]">
          <select aria-label="通道组" className="block h-[22px] w-[277px] appearance-none rounded-[2px] border border-[#20262b] bg-[#2b3237] pl-[2px] text-xs text-[#e2e6e8]"><option>全部</option></select>
          <Arrow className="pointer-events-none absolute right-1 top-[7px] text-[#7d858b]" />
        </div>
        <i className="ml-[14px] h-4 border-l-2 border-dotted border-[#666b66]" />
        <Ico s={16} className="ml-[12px]"><path d="M2 8h4l6-6v20l-6-6H2z" fill="none" stroke="currentColor" strokeWidth="2" /><path d="M15 4l8 8-8 8z" /></Ico>
        <h2 className="ml-[3px] text-sm">通道机架</h2>
        <svg width="24" height="24" viewBox="0 0 24 24" className="ml-auto" aria-hidden="true"><path d={arc(12, 10, -140, 140)} fill="none" stroke="#596167" strokeWidth="2" /><circle cx="12" cy="12" r="7" fill="#535b61" stroke="#2b3237" strokeWidth="1.500" /></svg>
        <span className="ml-2 flex h-[22px] w-9 items-center justify-end gap-1 rounded-md border border-[#2d353b] bg-[#50585e] pr-1 text-[10px] text-[#8e969b]">···<Ico s={4} vb="0 0 4 12" className="h-3"><path d="M0 0l3 2-3 2M4 8l-3 2 3 2" fill="none" stroke="currentColor" /></Ico></span>
        <Ico s={16} className="ml-[11px]"><path d="M1 18h3v4H1zM5 8h3v14H5zM10 14h3v8h-3zM15 4h3v18h-3zM20 17h3v5h-3z" /></Ico>
        <Ico s={16} className="ml-2"><path d="M0 4h6.500v17H0zM8.500 4H15v17H8.500zM17 4h6.500v17H17z" /><path d="M2 6v4M4.500 6v4M10.500 6v4M13 6v4M19 6v4M21.500 6v4" stroke="#41484e" /></Ico>
        <Ico s={10} vb="0 0 12 12" className="ml-[9px] mr-[5px]"><path d="M1 1l10 10M11 1L1 11" stroke="currentColor" strokeWidth="2" /></Ico>
      </div>
      <div className="flex h-[98px] border border-[#333a40] bg-[#5f676d]">
        <div className="flex flex-col gap-[4px] pl-[9px] pt-5">
          {rows.map((t, i) => (
            <div key={t} className="flex h-[26px] items-center">
              <button aria-label={`通道 ${i + 1} 开关`} className="h-2 w-2 rounded-full border-2 border-[#33511a] bg-[#b0f04e] outline outline-[#869a72]" />
              <span className="ml-[6px] flex gap-[3px]"><Dial /><Dial side /></span>
              <span className="ml-[7px] flex h-6 w-8 items-center justify-end rounded border border-[#363e44] bg-[#5a6268] pr-2 text-sm text-[#c2cace]">{i + 1}</span>
              <button className="ml-[10px] flex h-[26px] w-[277px] items-center justify-end gap-[3px] whitespace-nowrap rounded-[2px] border border-[#3c3f3c] bg-linear-to-b from-[#84826a] to-[#6b6a53] pr-1 text-[11px] text-[#f2f1e6]">
                <span className={i === 0 ? "pr-[3px]" : ""}>{t}</span><Wave s={15} />
              </button>
              <i className={`ml-[10px] w-2 rounded-[2px] border ${i === 0 ? "h-[26px] border-[#a4e23c] bg-[#a4e23c] shadow-[inset_0_0_0_1px_#36451f]" : "h-[22px] border-[#2c3439] bg-[#535b61]"}`} />
            </div>
          ))}
        </div>
        <div className="ml-2 mt-[18px] h-[61px] w-[257px] border border-[#383f45] bg-[#454c52]"><div className="h-[30px] border-b border-[#353c41]" /></div>
      </div>
      <button aria-label="添加通道" className="block h-7 w-full pr-[198px] text-lg leading-none">+</button>
    </section>
  );
}

/* ---------- limiter ---------- */

function Knob({ label, color, from = -135, to, at }: { label: string; color: string; from?: number; to: number; at: number }) {
  const [x0, y0] = polar(24, 8, at);
  const [x1, y1] = polar(24, 17, at);
  return (
    <div className="flex w-[54px] flex-col items-center text-xs leading-[18px] text-[#d2d8da]">
      <svg width="48" height="48" viewBox="0 0 48 48" role="slider" aria-label={label} aria-valuenow={at}>
        <path d={arc(24, 21, -135, 135)} fill="none" stroke="#2f363c" strokeWidth="4" />
        <path d={arc(24, 21, -134, 134)} fill="none" stroke="#434a50" strokeWidth="2" />
        {to > from && <path d={arc(24, 21, from, to)} fill="none" stroke={color} strokeWidth="2.500" />}
        <ellipse cx="24" cy="31" rx="15" ry="14" fill="#2b3237" />
        <circle cx="24" cy="24" r="17.500" fill="url(#knobFace)" stroke="#2a3035" />
        <path d={`M24 24L${polar(24, 17, at - 50).join(" ")}A17 17 0 0 1 ${polar(24, 17, at + 50).join(" ")}Z`} fill={Math.abs(at) > 100 ? "#20262a" : "#8d979c"} opacity=".2" />
        <path d={`M${x0} ${y0}L${x1} ${y1}`} stroke={color} strokeWidth="2.500" />
      </svg>
      {label}
    </div>
  );
}

const limiterPts: Pt[] = [[97, 510], [107, 490], [113, 505], [119, 552], [123, 478], [132, 500], [145, 530], [155, 522], [162, 512], [168, 512], [178, 475], [183, 490], [189, 480], [192, 430], [199, 407], [207, 470], [218, 490], [228, 500], [245, 515], [255, 530], [275, 545], [290, 555], [315, 562], [340, 566], [344, 525], [350, 478], [358, 470], [372, 478], [390, 508], [410, 520], [430, 545], [455, 555], [478, 562], [484, 520], [488, 445], [494, 450], [500, 370], [507, 460], [515, 455], [522, 455], [530, 490], [560, 478], [600, 482], [640, 488], [690, 480], [700, 482], [712, 518], [722, 485], [728, 500], [734, 480], [755, 498], [778, 500], [783, 550], [790, 565], [796, 432], [804, 470], [812, 414], [820, 490], [845, 510], [860, 478], [875, 490], [930, 485], [942, 512], [953, 560], [980, 562], [1011, 570], [1015, 500], [1020, 525], [1026, 440], [1034, 520], [1046, 450], [1060, 465], [1073, 480], [1080, 565], [1093, 572], [1096, 450], [1101, 392], [1108, 435], [1116, 440], [1150, 460], [1175, 475], [1195, 470], [1215, 462], [1230, 485], [1242, 415], [1248, 450], [1256, 405], [1270, 430], [1280, 460], [1300, 445], [1315, 440], [1340, 470], [1362, 470], [1375, 460], [1400, 460], [1408, 430], [1414, 362], [1422, 440], [1455, 430], [1468, 492], [1478, 455], [1500, 475], [1516, 465]];

function LimiterGraph() {
  const r = rng(77);
  let d = "M97 593";
  for (let x = 97; x <= 1517; x += 2.4) {
    const y = interp(limiterPts, x);
    d += `L${x.toFixed(1)} ${(y + (y < 540 ? (r() - 0.5) * (x > 1100 ? 30 : 14) : (r() - 0.5) * 3)).toFixed(1)}`;
  }
  d += "L1517 593Z";
  return (
    <svg className="h-40 w-full flex-1" viewBox="97 113 1420 480" preserveAspectRatio="none" role="img" aria-label="电平历史">
      <rect x="97" y="113" width="1420" height="480" fill="#262e31" />
      <path d="M108 320C130 130 320 150 355 250C370 190 400 150 440 115h20C420 160 390 210 380 268C480 255 550 350 535 440C520 510 480 530 440 480C410 460 380 500 330 500C240 500 260 400 240 362L160 362L185 318Q140 335 108 320z" fill="#22292c" />
      <path d={d} fill="#d6ead9" />
      <path d="M97 353.500H1517" stroke="#4e9a28" strokeWidth="4" />
      <path d="M97 115H1517" stroke="#a58ed0" strokeWidth="3" />
    </svg>
  );
}

function CurveBox({ id }: { id: string }) {
  return (
    <label htmlFor={id} className="flex flex-col items-center text-xs leading-4 text-[#d2d8da]">
      <i className="mb-[1px] h-2 border-l border-[#a7afb2]" />
      曲线
      <span className="flex h-[21px] w-[26px] items-center border border-[#465056] bg-[#76838a] pr-[2px] text-[#20272c]">
        <input id={id} defaultValue="3" className="w-full min-w-0 bg-transparent text-right text-[13px] leading-4 text-white" /><Spin />
      </span>
    </label>
  );
}

function Limiter() {
  return (
    <section aria-label="Fruity Limiter" className="absolute left-[276px] top-[481px] w-[638px] border border-[#353d43] bg-[#434b50]/95 pb-1 pl-[3px] pr-1 text-[#9aa2a6]">
      <svg width="0" height="0" className="absolute" aria-hidden="true"><defs><linearGradient id="knobFace" x2="0" y2="1"><stop offset="0" stopColor="#4b5359" /><stop offset=".6" stopColor="#363d42" /><stop offset="1" stopColor="#2f363b" /></linearGradient></defs></svg>
      <div className="flex h-[25px] items-center text-xs">
        <Arrow s={10} className="ml-1" />
        <Settings size={14} strokeWidth={3} className="ml-[9px]" />
        <h2 className="ml-[7px]">Fruity Limiter <span className="opacity-75">(主)</span></h2>
        <div className="ml-auto flex items-center gap-[5px] rounded bg-[#3d454a] pl-2 pr-1"><span>预设值</span><Arrow s={10} className="rotate-180" /><Arrow s={10} /></div>
        <Ico s={9} vb="0 0 12 12" className="ml-[10px]"><path d="M1 2h10v2H1z" /></Ico>
        <Ico s={10} vb="0 0 12 12" className="ml-[10px]"><path d="M1 2h10v9H1zM2.500 5v4.500h7V5z" fillRule="evenodd" /></Ico>
        <Ico s={10} vb="0 0 12 12" className="ml-[9px] mr-1"><path d="M1 1l10 10M11 1L1 11" stroke="currentColor" strokeWidth="1.500" /></Ico>
      </div>
      <div className="border border-[#171c20] bg-[#2a3036]">
        <div className="flex">
          <div className="flex w-[30px] shrink-0 flex-col items-center gap-[2px] pt-[3px]">
            <div className="flex h-[83px] w-[21px] flex-col items-center justify-between rounded bg-[#23252a] pb-2 pt-[9px] text-[#d5dbde]">
              <Ico s={8} vb="0 0 8 8"><path d="M0 2h8L4 7z" /></Ico>
              <i className="mt-1 h-[10px] w-[2px] bg-[#a855c8]" />
              <i className="h-2 w-2 rounded-full border-2 border-[#a4ee55]" />
              <Ico s={8} vb="0 0 8 8"><path d="M0 6h2l3-5h3v2H6L3 8H0z" /></Ico>
              <i className="h-[6px] w-2 border-y-2 border-[#9258e0]" />
            </div>
            <div className="flex h-[65px] w-[21px] items-center justify-center rounded bg-[#23252a]">
              <div className="h-[9px] w-[14px] border-y-2 border-[#505a5f] bg-[#aab4b8]" />
            </div>
          </div>
          <LimiterGraph />
        </div>
        <div className="grid h-4 grid-cols-[284px_178px_1fr] text-center text-xs leading-[15px] text-[#e3e7e9]">
          <span className="pr-6">响度</span><span className="border-x border-[#6b7379]">包络</span><span>噪声门限</span>
        </div>
        <div className="flex h-[124px] bg-[radial-gradient(ellipse_at_60%_90%,#77868f_0%,#5b666e_45%,#454c50_100%)] pt-[3px]">
          <div className="flex w-[115px] pl-[5px] pt-1">
            <Knob label="增益" color="#6b3fc0" to={90} at={90} />
            <Knob label="饱和.." color="#704545" to={135} at={135} />
          </div>
          <div className="flex h-[117px] w-[347px] rounded-md bg-[#2c343b]/50">
            <div className="flex w-[172px] flex-col justify-between pt-1">
              <div className="pl-1"><Knob label="上限" color="#55a02b" to={0} at={0} /></div>
              <div className="flex text-xs leading-5">
                <button className="w-8 bg-[#2c3339] text-white">限制</button><button className="w-8 bg-[#48525a] text-[#a9b1b5]">压缩</button>
              </div>
            </div>
            <div className="pt-1"><Knob label="起音" color="#81a09b" to={-112} at={-108} /><CurveBox id="attack-curve" /></div>
            <div className="ml-[2px] pt-1"><Knob label="释音" color="#81a09b" to={0} at={0} /><CurveBox id="release-curve" /></div>
            <div className="ml-[6px] pt-1"><Knob label="延音" color="#81a09b" to={-58} at={-55} /></div>
          </div>
          <div className="ml-px flex flex-col justify-between pb-1 pt-1">
            <div className="flex">
              <Knob label="释音" color="#5f5338" to={-25} at={-25} />
              <Knob label="增益" color="#5f5338" to={135} at={135} />
              <Knob label="阈值" color="#6a5b38" to={-135} at={-135} />
            </div>
            <div className="flex justify-end gap-[2px] pb-[2px] pr-[2px] text-[#b5bfc2]">
              <button aria-label="下一个" className="flex h-6 w-6 items-center justify-center rounded-full bg-[#8d999c]"><Ico s={8} vb="0 0 8 8"><path d="M0 2h8L4 7z" /></Ico></button>
              <button aria-label="切换" className="flex h-6 w-6 items-center justify-center rounded-full bg-[#8d999c]"><Ico s={10} vb="0 0 8 12"><path d="M4 0l4 5H0zM4 12l4-5H0z" /></Ico></button>
            </div>
          </div>
        </div>
      </div>
    </section>
  );
}

/* ---------- taskbar ---------- */

const Baidu = () => (
  <svg width="24" height="24" viewBox="0 0 24 24" aria-hidden="true"><rect width="24" height="24" rx="5" fill="#fbfcfe" /><g fill="none" strokeWidth="2.500"><circle cx="8" cy="14" r="3.500" stroke="#2f7cf6" /><circle cx="16" cy="14" r="3.500" stroke="#2fb6f0" /><circle cx="12" cy="8.500" r="3.500" stroke="#38a8f8" /></g><circle cx="12" cy="13" r="1.500" fill="#ef4b5e" /><path d="M8 22h4v2H8z" fill="#ef4b5e" /><path d="M12 22h4v2h-4z" fill="#2f7cf6" /></svg>
);

function Task({ label, icon, w, active = false }: { label: string; icon: React.ReactNode; w: string; active?: boolean }) {
  return (
    <button className={`relative flex h-10 shrink-0 items-center gap-2 rounded border pl-[7px] pr-px text-xs text-white ${active ? "border-[#3a3a3a] bg-[#2e2e2e]" : "border-transparent"} ${w}`}>
      <span className="flex h-6 w-6 shrink-0 items-center justify-center">{icon}</span>
      <span className="min-w-0 flex-1 overflow-hidden whitespace-nowrap text-left">{label}</span>
      <i className={`absolute bottom-[1px] h-[3px] rounded-full bg-[#9a9a9a] ${active ? "left-[11px] w-4" : "left-4 w-[6px]"}`} />
    </button>
  );
}

function Swirl() {
  const colors = ["#e6359f", "#f04a2c", "#f6a41c", "#e9e529", "#53c93b", "#1fb6d9", "#2e72ee", "#a246e0"];
  return (
    <svg width="24" height="24" viewBox="-12 -12 24 24" aria-hidden="true">
      {colors.map((c, i) => <path key={c} d="M0 -4C3 -9 7 -10 10 -6A12 12 0 0 0 0 -12A12 12 0 0 0 -5 -10C-5 -6 -3 -4 0 -4z" fill={c} transform={`rotate(${i * 45})`} />)}
      <circle r="4.500" fill="#fff" />
    </svg>
  );
}

function Taskbar() {
  return (
    <footer className="flex h-12 shrink-0 items-center bg-[#202020] pl-[21px] text-white">
      <button aria-label="开始" className="mr-[13px] grid h-[23px] w-[23px] shrink-0 grid-cols-2 gap-px">
        <i className="bg-[#7fe3fb]" /><i className="bg-[#54cdf9]" /><i className="bg-[#3fbdf7]" /><i className="bg-[#159cf2]" />
      </button>
      <Task label="微信" w="w-[76px]" icon={<svg width="24" height="24" viewBox="0 0 24 24"><path d="M9 2c12 0 12 14 0 14l-2 0-4 2 1-3C-3 11 0 2 9 2z" fill="#28c863" /><path d="M16 9c10 0 10 11 3 12l1 2-3-2c-10 0-9-12-1-12z" fill="#e6e9e8" /><g fill="#156b36"><circle cx="6" cy="7" r="1" /><circle cx="11" cy="7" r="1" /></g><circle cx="14" cy="13" r="1" fill="#777" /><circle cx="19" cy="13" r="1" fill="#777" /></svg>} />
      <Task label="百度网盘" w="w-[100px]" icon={<Baidu />} />
      <Task label="视频播放" w="w-[100px]" icon={<Baidu />} />
      <Task label="创作中心 - 哔哩哔哩弹幕" w="w-[180px]" icon={<Swirl />} />
      <Task label="OPED - 文件资源管理器" w="w-[179px]" icon={<svg width="24" height="20" viewBox="0 0 24 20"><path d="M1 1h8l2 3h12v6H1z" fill="#e8a317" /><path d="M1 5h22v14H1z" fill="#fbd15b" /></svg>} />
      <Task label="Adobe Premiere Pro 202" w="w-[179px]" icon={<span className="flex h-[21px] w-[22px] items-center justify-center border-2 border-[#d07be8] bg-[#2a0634] text-[11px] leading-none text-[#d98df0]">Pr</span>} />
      <Task active label="OPED.flp - FL Studio 202" w="ml-px w-[176px]" icon={<svg width="24" height="24" viewBox="0 0 24 24"><circle cx="12" cy="12" r="11.500" fill="#3a434a" stroke="#59636a" /><path d="M7 8c4-3 9-2 10 1 1 5-4 13-8 13S4 11 7 8z" fill="#f4772a" /><path d="M8 9c2-1 3 0 3 3s-1 7-2 7-3-8-1-10z" fill="#fbc24a" /><path d="M6 6c3-5 6-1 7-3 1-3 4-1 6-2-1 3 0 6-1 9-3-2-5 1-6-2-2 2-5 1-6-2z" fill="#5a9a2b" /></svg>} />
      <div className="ml-auto flex shrink-0 items-center pr-[19px]">
        <ChevronUp size={16} />
        <span className="ml-[18px] text-sm">中</span>
        <Ico s={17} className="ml-4"><g fill="none" stroke="currentColor" strokeWidth="1.700"><path d="M15 2H2v16h17v-6M6 22h10M9 18v4M13 18v4M17 2h6v6h-6zM20 8v12" /></g></Ico>
        <Volume2 size={18} strokeWidth={1.5} className="ml-2" />
        <time className="ml-3 text-right text-xs leading-4">12:23<br />2025/4/6</time>
        <Ico s={16} className="ml-2"><path d="M12 1c-5 0-8 4-8 8v6l-3 4h20l-2-5V8h-4zM8 21h7l-3 3z" /><path d="M9 8h5l-5 6h5" fill="none" stroke="#202020" strokeWidth="2" /><path d="M17 1h6l-5 6h6" fill="none" stroke="currentColor" strokeWidth="1.500" /></Ico>
      </div>
    </footer>
  );
}

export default function App() {
  return (
    <main className="relative flex h-screen flex-col overflow-hidden bg-[#444b51] font-['Noto_Sans','Noto_Sans_CJK_SC',sans-serif]">
      <TopBar />
      <div className="flex min-h-0 flex-1 border-b border-t border-[#2a3137]">
        <div className="w-2 shrink-0 border-r border-[#2f363c] bg-[#4b5258]" />
        <div className="flex min-w-0 flex-1 flex-col">
          <PlaylistTitle />
          <div className="flex min-h-0 flex-1 overflow-hidden">
            <Picker />
            <TrackHeaders />
            <Arrangement />
            <VScroll />
          </div>
        </div>
      </div>
      <Limiter />
      <ChannelRack />
      <Taskbar />
    </main>
  );
}
